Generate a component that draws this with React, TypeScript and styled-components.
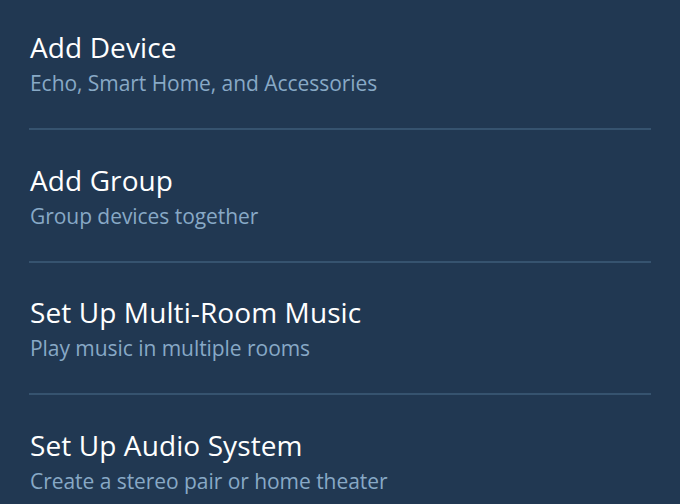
import React from 'react'
import styled, { createGlobalStyle } from 'styled-components'

const items = [
    { title: 'Add Device', subtitle: 'Echo, Smart Home, and Accessories' },
    { title: 'Add Group', subtitle: 'Group devices together' },
    { title: 'Set Up Multi-Room Music', subtitle: 'Play music in multiple rooms' },
    { title: 'Set Up Audio System', subtitle: 'Create a stereo pair or home theater' },
]

function App() {
    return (
        <>
            <GlobalStyle />
            <Root>
                {items.map((item) => (
                    <Row key={item.title}>
                        <Title>{item.title}</Title>
                        <Subtitle>{item.subtitle}</Subtitle>
                    </Row>
                ))}
            </Root>
        </>
    )
}

const GlobalStyle = createGlobalStyle`
    html, body {
        margin: 0;
        padding: 0;
        background: #213852;
    }
`

const Root = styled.div`
    width: 680px;
    height: 504px;
    overflow: hidden;
    background: #213852;
    padding: 0 29px;
    box-sizing: border-box;
    font-family: 'Open Sans', 'Noto Sans', sans-serif;
`

const Row = styled.div`
    padding: 31.5px 0 31px 1px;
    border-bottom: 2px solid #36536f;
    display: flex;
    flex-direction: column;
    gap: 4px;

    &:first-child {
        padding-top: 29px;
    }

    &:last-child {
        border-bottom: none;
    }
`

const Title = styled.div`
    color: #ffffff;
    font-size: 28px;
    line-height: 36px;
    letter-spacing: 0.1px;
    white-space: nowrap;
`

const Subtitle = styled.div`
    color: #88a9c6;
    font-size: 21px;
    line-height: 28px;
    letter-spacing: -0.05px;
    white-space: nowrap;
`

export default App
